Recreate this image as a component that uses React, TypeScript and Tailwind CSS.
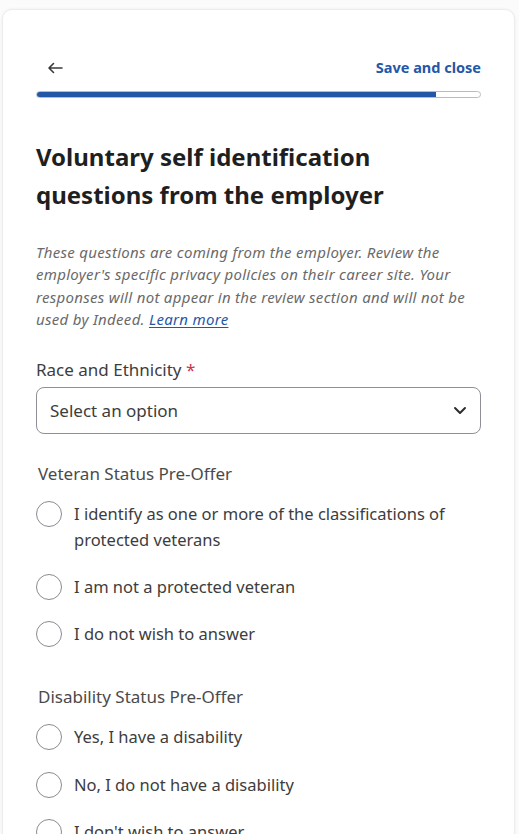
import React from 'react';

const veteranOptions = [
  'I identify as one or more of the classifications of protected veterans',
  'I am not a protected veteran',
  'I do not wish to answer',
];

const disabilityOptions = [
  'Yes, I have a disability',
  'No, I do not have a disability',
  "I don't wish to answer",
];

const Radio: React.FC<{ label: string }> = ({ label }) => (
  <label className="flex items-start gap-[12px] text-[16.5px] leading-[26px] text-[#3d3d3d]">
    <span className="h-[26px] w-[26px] shrink-0 rounded-full border-[1.5px] border-[#8a8a93] bg-white" />
    <span>{label}</span>
  </label>
);

export default function App() {
  return (
    <div className="h-[834px] overflow-hidden bg-[#fbfbfb] pt-[9px] pl-[2px] pr-[4px]" style={{ fontFamily: '"Noto Sans", "Open Sans", sans-serif' }}>
      <div className="h-[900px] rounded-[10px] border border-[#ececec] bg-white px-[33px] pt-[47px] shadow-[0_0_3px_rgba(0,0,0,0.06)]">
        {/* header */}
        <div className="flex items-center justify-between pl-[11px]">
          <svg width="16" height="12" viewBox="0 0 16 12" fill="none" stroke="#3a3a3a" strokeWidth="1.6" strokeLinecap="round" strokeLinejoin="round">
            <path d="M15 6H2M6.5 1.5 2 6l4.5 4.5" />
          </svg>
          <span className="text-[14.5px] font-bold text-[#2557a7]">Save and close</span>
        </div>

        {/* progress */}
        <div className="mt-[12px] h-[7px] w-full overflow-hidden rounded-full border border-[#b8bcc8] bg-white">
          <div className="h-full w-[90%] bg-[#2557a7]" />
        </div>

        <h1 className="mt-[40px] text-[24px] font-bold leading-[38px] text-[#1f1f1f]">
          Voluntary self identification questions from the employer
        </h1>

        <p className="mt-[27px] text-[15px] italic leading-[22.5px] tracking-[0.3px] text-[#6a6a6a]">
          These questions are coming from the employer. Review the employer's specific privacy policies on their career site. Your responses will not appear in the review section and will not be used by Indeed.{' '}
          <a className="text-[#2557a7] underline decoration-[#2557a7] underline-offset-2">Learn more</a>
        </p>

        {/* race and ethnicity */}
        <div className="mt-[26px] text-[17px] text-[#3d3d3d]">
          Race and Ethnicity <span className="text-[#c8354f]">*</span>
        </div>
        <button className="mt-[5px] flex h-[47px] w-full items-center justify-between rounded-[8px] border border-[#8f8f98] px-[13px] text-left text-[17px] text-[#3d3d3d]">
          <span>Select an option</span>
          <svg width="14" height="9" viewBox="0 0 14 9" fill="none" stroke="#2d2d2d" strokeWidth="2" strokeLinecap="round" strokeLinejoin="round">
            <path d="M2 2l5 5 5-5" />
          </svg>
        </button>

        {/* veteran */}
        <div className="mt-[27px] pl-[2px] text-[17px] text-[#4a4a4a]">Veteran Status Pre-Offer</div>
        <div className="mt-[14px] flex flex-col gap-[21px]">
          {veteranOptions.map((o) => (
            <Radio key={o} label={o} />
          ))}
        </div>

        {/* disability */}
        <div className="mt-[37px] pl-[2px] text-[17px] text-[#4a4a4a]">Disability Status Pre-Offer</div>
        <div className="mt-[15px] flex flex-col gap-[21.5px]">
          {disabilityOptions.map((o) => (
            <Radio key={o} label={o} />
          ))}
        </div>
      </div>
    </div>
  );
}
